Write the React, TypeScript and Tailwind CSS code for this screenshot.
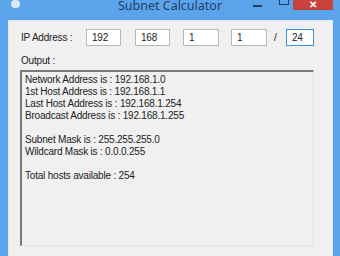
import React from "react";

const lines = [
  "Network Address is : 192.168.1.0",
  "1st Host Address is : 192.168.1.1",
  "Last Host Address is : 192.168.1.254",
  "Broadcast Address is : 192.168.1.255",
  "",
  "Subnet Mask is : 255.255.255.0",
  "Wildcard Mask is : 0.0.0.255",
  "",
  "Total hosts available : 254",
];

function Box({ w, ml, value, focus }: { w: string; ml: string; value: string; focus?: boolean }) {
  return (
    <div
      className={`${w} ${ml} h-[17px] bg-white border flex items-center pl-[5px] text-[10px] leading-none text-[#222] ${
        focus ? "border-[#3c8ee0]" : "border-[#b5b8bd]"
      }`}
    >
      {value}
    </div>
  );
}

export default function App() {
  return (
    <div
      className="w-[340px] h-[256px] bg-[#5ba4ec] flex flex-col overflow-hidden"
      style={{ fontFamily: '"Liberation Sans", Arial, sans-serif' }}
    >
      {/* title bar */}
      <div className="relative h-[20px] shrink-0">
        <div className="absolute left-[11px] top-0 w-[9px] h-[8px] bg-[#e8eef5] rounded-sm opacity-90" />
        <div
          className="absolute left-0 right-0 top-[-3px] text-center text-[12.5px] leading-[18px] text-[#1f3f66]"
          style={{ fontFamily: '"Noto Sans", sans-serif' }}
        >
          Subnet Calculator
        </div>
        <div className="absolute left-[253px] top-[5px] w-[9px] h-[2px] bg-[#1f3f66]" />
        <div className="absolute left-[279px] top-[-2px] w-[10px] h-[7px] border border-[#1f3f66]" />
        <div className="absolute left-[293px] top-0 w-[40px] h-[10px] bg-[#c8433b] flex items-center justify-center">
          <span className="text-white text-[10px] leading-none font-bold">✕</span>
        </div>
      </div>
      {/* client */}
      <div className="ml-[8px] mr-[7px] flex-1 bg-[#f0f0f0] border-t border-l border-r border-[#dde9f5] flex flex-col tracking-[-0.2px]">
        <div className="flex items-center mt-[8px] pl-[12px] text-[10px] text-[#222]">
          <span className="w-[65px]">IP Address :</span>
          <Box w="w-[35px]" ml="ml-0" value="192" />
          <Box w="w-[35px]" ml="ml-[14px]" value="168" />
          <Box w="w-[36px]" ml="ml-[13px]" value="1" />
          <Box w="w-[36px]" ml="ml-[12px]" value="1" />
          <span className="ml-[7px] w-[12px]">/</span>
          <Box w="w-[28px]" ml="ml-0" value="24" focus />
        </div>
        <div className="mt-[9px] pl-[12px] text-[10px] leading-[12px] text-[#222]">Output :</div>
        <div className="ml-[11px] mt-[3px] w-[294px] h-[176px] border-t-2 border-l-2 border-t-[#7a7a7a] border-l-[#7a7a7a] border-b border-r border-b-[#e3e3e3] border-r-[#e3e3e3] pl-[3px] pt-[2px] text-[10px] leading-[12px] text-[#222]">
          {lines.map((l, i) => (
            <div key={i} className="h-[12px] whitespace-pre">
              {l}
            </div>
          ))}
        </div>
      </div>
    </div>
  );
}
